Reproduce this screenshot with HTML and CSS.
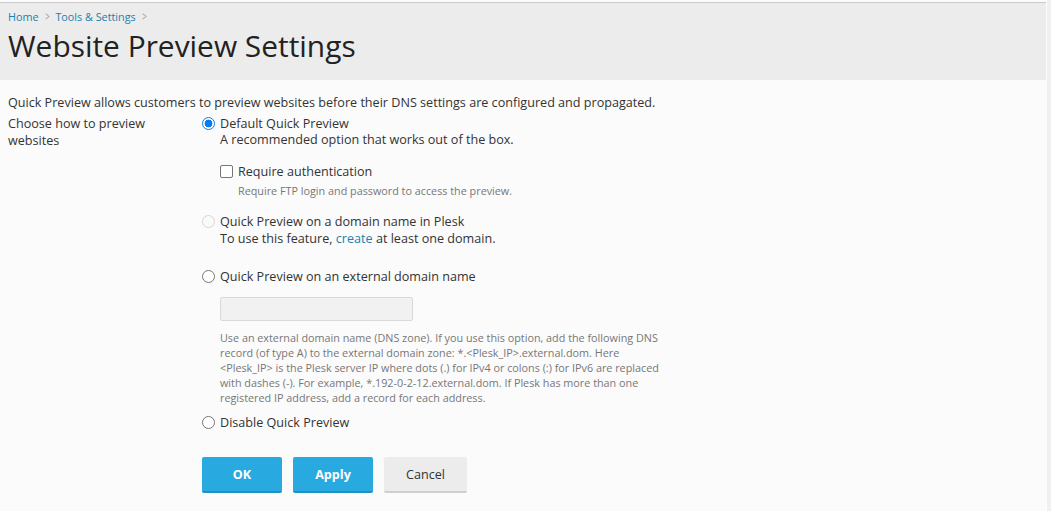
FILE: index.html
```html
<!DOCTYPE html>
<html>
<head>
<meta charset="utf-8">
<link rel="stylesheet" href="styles.css">
</head>
<body>
<div class="page">
  <header class="head">
    <nav class="crumbs">
      <a href="#">Home</a><span class="sep">&gt;</span><a href="#">Tools &amp; Settings</a><span class="sep">&gt;</span>
    </nav>
    <h1 class="title">Website Preview Settings</h1>
  </header>
  <main class="content">
    <p class="intro">Quick Preview allows customers to preview websites before their DNS settings are configured and propagated.</p>
    <div class="row">
      <div class="label">Choose how to preview websites</div>
      <div class="field">
        <div class="opt">
          <label class="radio"><span class="rb checked"></span>Default Quick Preview</label>
          <div class="desc">A recommended option that works out of the box.</div>
          <div class="sub">
            <label class="check"><span class="cb"></span>Require authentication</label>
            <div class="hint">Require FTP login and password to access the preview.</div>
          </div>
        </div>
        <div class="opt opt-2">
          <label class="radio"><span class="rb disabled"></span>Quick Preview on a domain name in Plesk</label>
          <div class="desc">To use this feature, <a href="#">create</a> at least one domain.</div>
        </div>
        <div class="opt opt-3">
          <label class="radio"><span class="rb"></span>Quick Preview on an external domain name</label>
          <div class="sub2">
            <div class="input"></div>
            <div class="hint long">Use an external domain name (DNS zone). If you use this option, add the following DNS record (of type A) to the external domain zone: *.&lt;Plesk_IP&gt;.external.dom. Here &lt;Plesk_IP&gt; is the Plesk server IP where dots (.) for IPv4 or colons (:) for IPv6 are replaced with dashes (-). For example, *.192-0-2-12.external.dom. If Plesk has more than one registered IP address, add a record for each address.</div>
          </div>
        </div>
        <div class="opt opt-4">
          <label class="radio"><span class="rb"></span>Disable Quick Preview</label>
        </div>
        <div class="buttons">
          <button class="btn primary">OK</button>
          <button class="btn primary">Apply</button>
          <button class="btn secondary">Cancel</button>
        </div>
      </div>
    </div>
  </main>
</div>
</body>
</html>
```
FILE: styles.css
```css
html, body {
  margin: 0;
  padding: 0;
  height: 100%;
}
body {
  font-family: "Open Sans", "Noto Sans", sans-serif;
  font-size: 12.6px;
  color: #333;
  background: #f0f0f0;
}
.page {
  margin-right: 4px;
  height: 100%;
  background: #fbfbfb;
  border-right: 1px solid #fdfdfd;
  padding-top: 2px;
  box-sizing: border-box;
}
.head {
  background: #ececec;
  border-top: 1px solid #c9c9c9;
  padding: 5px 8px 0;
  height: 78px;
  box-sizing: border-box;
}
.crumbs {
  font-size: 10.8px;
  line-height: 18px;
  display: flex;
  align-items: center;
}
.crumbs a {
  color: #1b7fae;
  text-decoration: none;
}
.crumbs .sep {
  color: #999;
  margin: 0 5px;
  font-size: 12px;
  display: inline-block;
  transform: scaleX(0.65);
}
.title {
  margin: 1px 0 0;
  font-size: 29.9px;
  font-weight: 400;
  line-height: 38px;
  color: #222;
}
.content {
  padding: 14px 8px 0;
}
.intro {
  margin: 0;
  line-height: 18px;
}
.row {
  display: flex;
  padding-top: 3px;
}
.label {
  flex: none;
  line-height: 17px;
  padding-right: 24px;
  box-sizing: border-box;
  width: 194px;
}
.field {
  flex: 1;
}
.radio, .check {
  display: flex;
  align-items: center;
  line-height: 17px;
  color: #333;
}
.rb {
  width: 11px;
  height: 11px;
  border: 1px solid #767676;
  border-radius: 50%;
  margin-right: 5px;
  flex: none;
  background: #fff;
}
.rb.checked {
  border-color: #0b7bed;
  background: radial-gradient(circle, #0b7bed 0 3.6px, #fff 4.2px);
}
.rb.disabled {
  border-color: #d6d6d6;
  background: #fafafa;
}
.desc {
  padding-left: 18px;
  line-height: 16px;
}
.opt-2 .desc {
  margin-top: 1px;
}
.desc a {
  color: #1b7fae;
  text-decoration: none;
}
.sub {
  padding-left: 18px;
  margin-top: 15px;
}
.cb {
  width: 11px;
  height: 11px;
  border: 1px solid #767676;
  border-radius: 2px;
  background: #fff;
  margin-right: 5px;
  flex: none;
}
.hint {
  font-size: 10.8px;
  color: #777;
  padding-left: 18px;
  line-height: 15px;
  margin-top: 3px;
}
.opt-2 {
  margin-top: 15px;
}
.opt-3 {
  margin-top: 21px;
}
.sub2 {
  padding-left: 18px;
  margin-top: 12px;
}
.input {
  width: 191px;
  height: 22px;
  border: 1px solid #d9d9d9;
  background: #f1f1f1;
  border-radius: 2px;
}
.hint.long {
  padding-left: 0;
  margin-top: 9px;
  max-width: 446px;
}
.opt-4 {
  margin-top: 9px;
}
.buttons {
  display: flex;
  gap: 11px;
  margin-top: 26px;
}
.btn {
  font-family: "Open Sans", "Noto Sans", sans-serif;
  font-size: 12.6px;
  font-weight: 700;
  width: 80px;
  height: 36px;
  border: none;
  border-bottom: 2px solid #1d93c4;
  border-radius: 2px;
  background: #28a9df;
  color: #fff;
  padding: 0;
}
.btn.secondary {
  background: #ececec;
  color: #333;
  border-bottom-color: #cfcfcf;
  font-weight: 400;
  width: 83px;
}
```
